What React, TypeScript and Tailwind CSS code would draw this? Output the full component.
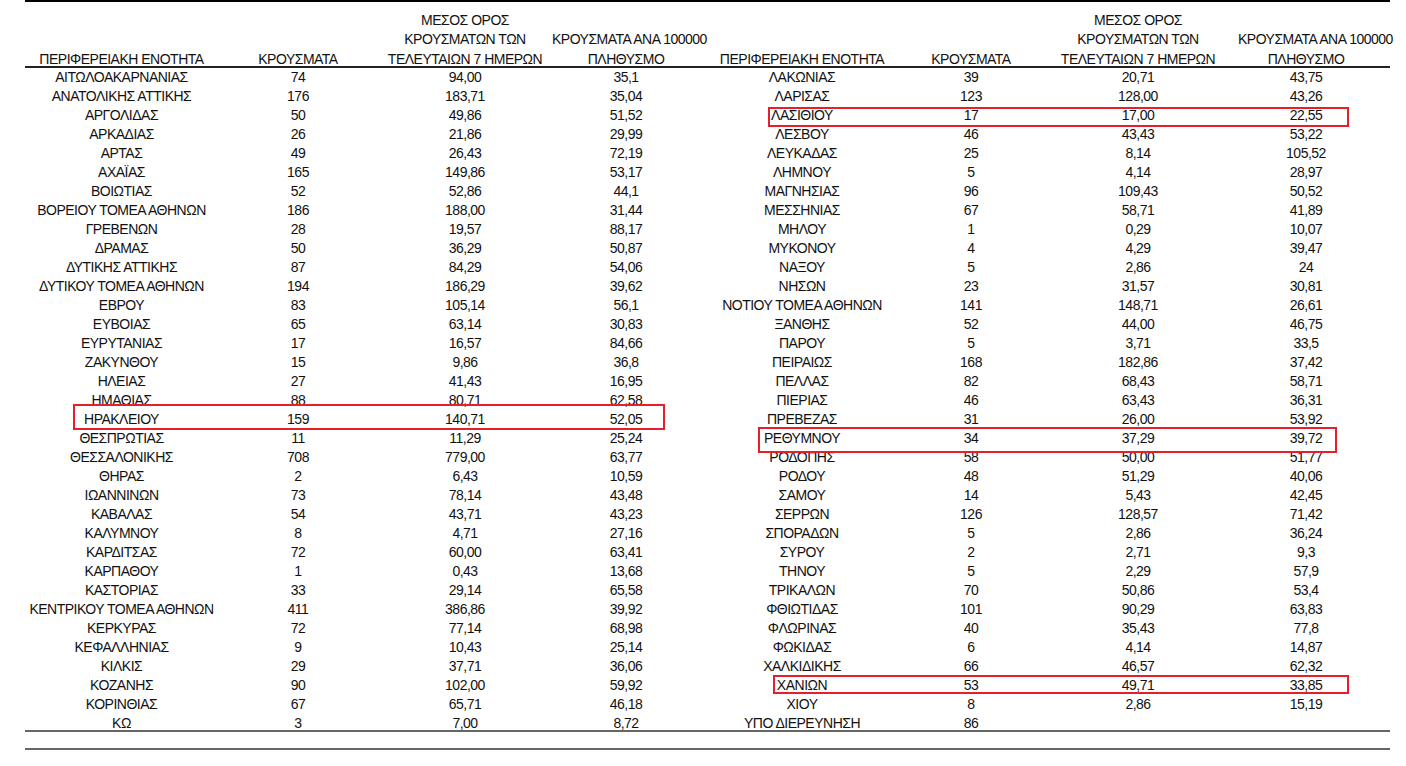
import React from 'react'

type Row = [string, string, string, string]

const left: Row[] = [
  ['ΑΙΤΩΛΟΑΚΑΡΝΑΝΙΑΣ', '74', '94,00', '35,1'],
  ['ΑΝΑΤΟΛΙΚΗΣ ΑΤΤΙΚΗΣ', '176', '183,71', '35,04'],
  ['ΑΡΓΟΛΙΔΑΣ', '50', '49,86', '51,52'],
  ['ΑΡΚΑΔΙΑΣ', '26', '21,86', '29,99'],
  ['ΑΡΤΑΣ', '49', '26,43', '72,19'],
  ['ΑΧΑΪΑΣ', '165', '149,86', '53,17'],
  ['ΒΟΙΩΤΙΑΣ', '52', '52,86', '44,1'],
  ['ΒΟΡΕΙΟΥ ΤΟΜΕΑ ΑΘΗΝΩΝ', '186', '188,00', '31,44'],
  ['ΓΡΕΒΕΝΩΝ', '28', '19,57', '88,17'],
  ['ΔΡΑΜΑΣ', '50', '36,29', '50,87'],
  ['ΔΥΤΙΚΗΣ ΑΤΤΙΚΗΣ', '87', '84,29', '54,06'],
  ['ΔΥΤΙΚΟΥ ΤΟΜΕΑ ΑΘΗΝΩΝ', '194', '186,29', '39,62'],
  ['ΕΒΡΟΥ', '83', '105,14', '56,1'],
  ['ΕΥΒΟΙΑΣ', '65', '63,14', '30,83'],
  ['ΕΥΡΥΤΑΝΙΑΣ', '17', '16,57', '84,66'],
  ['ΖΑΚΥΝΘΟΥ', '15', '9,86', '36,8'],
  ['ΗΛΕΙΑΣ', '27', '41,43', '16,95'],
  ['ΗΜΑΘΙΑΣ', '88', '80,71', '62,58'],
  ['ΗΡΑΚΛΕΙΟΥ', '159', '140,71', '52,05'],
  ['ΘΕΣΠΡΩΤΙΑΣ', '11', '11,29', '25,24'],
  ['ΘΕΣΣΑΛΟΝΙΚΗΣ', '708', '779,00', '63,77'],
  ['ΘΗΡΑΣ', '2', '6,43', '10,59'],
  ['ΙΩΑΝΝΙΝΩΝ', '73', '78,14', '43,48'],
  ['ΚΑΒΑΛΑΣ', '54', '43,71', '43,23'],
  ['ΚΑΛΥΜΝΟΥ', '8', '4,71', '27,16'],
  ['ΚΑΡΔΙΤΣΑΣ', '72', '60,00', '63,41'],
  ['ΚΑΡΠΑΘΟΥ', '1', '0,43', '13,68'],
  ['ΚΑΣΤΟΡΙΑΣ', '33', '29,14', '65,58'],
  ['ΚΕΝΤΡΙΚΟΥ ΤΟΜΕΑ ΑΘΗΝΩΝ', '411', '386,86', '39,92'],
  ['ΚΕΡΚΥΡΑΣ', '72', '77,14', '68,98'],
  ['ΚΕΦΑΛΛΗΝΙΑΣ', '9', '10,43', '25,14'],
  ['ΚΙΛΚΙΣ', '29', '37,71', '36,06'],
  ['ΚΟΖΑΝΗΣ', '90', '102,00', '59,92'],
  ['ΚΟΡΙΝΘΙΑΣ', '67', '65,71', '46,18'],
  ['ΚΩ', '3', '7,00', '8,72'],
]

const right: Row[] = [
  ['ΛΑΚΩΝΙΑΣ', '39', '20,71', '43,75'],
  ['ΛΑΡΙΣΑΣ', '123', '128,00', '43,26'],
  ['ΛΑΣΙΘΙΟΥ', '17', '17,00', '22,55'],
  ['ΛΕΣΒΟΥ', '46', '43,43', '53,22'],
  ['ΛΕΥΚΑΔΑΣ', '25', '8,14', '105,52'],
  ['ΛΗΜΝΟΥ', '5', '4,14', '28,97'],
  ['ΜΑΓΝΗΣΙΑΣ', '96', '109,43', '50,52'],
  ['ΜΕΣΣΗΝΙΑΣ', '67', '58,71', '41,89'],
  ['ΜΗΛΟΥ', '1', '0,29', '10,07'],
  ['ΜΥΚΟΝΟΥ', '4', '4,29', '39,47'],
  ['ΝΑΞΟΥ', '5', '2,86', '24'],
  ['ΝΗΣΩΝ', '23', '31,57', '30,81'],
  ['ΝΟΤΙΟΥ ΤΟΜΕΑ ΑΘΗΝΩΝ', '141', '148,71', '26,61'],
  ['ΞΑΝΘΗΣ', '52', '44,00', '46,75'],
  ['ΠΑΡΟΥ', '5', '3,71', '33,5'],
  ['ΠΕΙΡΑΙΩΣ', '168', '182,86', '37,42'],
  ['ΠΕΛΛΑΣ', '82', '68,43', '58,71'],
  ['ΠΙΕΡΙΑΣ', '46', '63,43', '36,31'],
  ['ΠΡΕΒΕΖΑΣ', '31', '26,00', '53,92'],
  ['ΡΕΘΥΜΝΟΥ', '34', '37,29', '39,72'],
  ['ΡΟΔΟΠΗΣ', '58', '50,00', '51,77'],
  ['ΡΟΔΟΥ', '48', '51,29', '40,06'],
  ['ΣΑΜΟΥ', '14', '5,43', '42,45'],
  ['ΣΕΡΡΩΝ', '126', '128,57', '71,42'],
  ['ΣΠΟΡΑΔΩΝ', '5', '2,86', '36,24'],
  ['ΣΥΡΟΥ', '2', '2,71', '9,3'],
  ['ΤΗΝΟΥ', '5', '2,29', '57,9'],
  ['ΤΡΙΚΑΛΩΝ', '70', '50,86', '53,4'],
  ['ΦΘΙΩΤΙΔΑΣ', '101', '90,29', '63,83'],
  ['ΦΛΩΡΙΝΑΣ', '40', '35,43', '77,8'],
  ['ΦΩΚΙΔΑΣ', '6', '4,14', '14,87'],
  ['ΧΑΛΚΙΔΙΚΗΣ', '66', '46,57', '62,32'],
  ['ΧΑΝΙΩΝ', '53', '49,71', '33,85'],
  ['ΧΙΟΥ', '8', '2,86', '15,19'],
  ['ΥΠΟ ΔΙΕΡΕΥΝΗΣΗ', '86', '', ''],
]

// στήλες: όνομα / κρούσματα / μέσος όρος / ανά 100000 — δύο φορές
const cols = 'grid grid-cols-[193px_160px_174px_148px_204px_134px_200px_136px_16px]'

function HeaderCells() {
  return (
    <>
      <div className="-mb-[3px]">ΠΕΡΙΦΕΡΕΙΑΚΗ ΕΝΟΤΗΤΑ</div>
      <div className="-mb-[3px]">ΚΡΟΥΣΜΑΤΑ</div>
      <div className="-mb-[3px]">
        ΜΕΣΟΣ ΟΡΟΣ
        <br />
        ΚΡΟΥΣΜΑΤΩΝ ΤΩΝ
        <br />
        ΤΕΛΕΥΤΑΙΩΝ 7 ΗΜΕΡΩΝ
      </div>
      <div className="-mb-[3px]">
        ΚΡΟΥΣΜΑΤΑ ΑΝΑ 100000
        <br />
        ΠΛΗΘΥΣΜΟ
      </div>
    </>
  )
}

/* κόκκινα πλαίσια επισήμανσης (πάνω από τον πίνακα) */
const marks = [
  'left-[73px] top-[404px] w-[592px] h-[26px]',
  'left-[768px] top-[107px] w-[581px] h-[20px]',
  'left-[758px] top-[427px] w-[579px] h-[26px]',
  'left-[773px] top-[675px] w-[576px] h-[19px]',
]

export default function App() {
  return (
    <div
      className="relative w-[1406px] h-[766px] bg-white text-[#111] text-[14px] tracking-[-0.5px] overflow-hidden"
      style={{ fontFamily: '"Liberation Sans", Arial, sans-serif' }}
    >
      <div className="ml-[25px] w-[1365px] border-t-2 border-black">
        {/* κεφαλίδα */}
        <div className={`${cols} h-[66px] items-end text-center leading-[19.5px] whitespace-nowrap border-b-2 border-[#222]`}>
          <HeaderCells />
          <HeaderCells />
          <div />
        </div>

        {/* γραμμές δεδομένων */}
        <div className={`${cols} auto-rows-[19px] items-center text-center leading-[19px] whitespace-nowrap`}>
          {left.map((l, i) => {
            const r = right[i]
            return (
              <React.Fragment key={i}>
                <div>{l[0]}</div>
                <div>{l[1]}</div>
                <div>{l[2]}</div>
                <div>{l[3]}</div>
                <div>{r[0]}</div>
                <div>{r[1]}</div>
                <div>{r[2]}</div>
                <div>{r[3]}</div>
                <div />
              </React.Fragment>
            )
          })}
        </div>

        <div className="-mt-[3px] border-t-2 border-[#666]" />
        <div className="mt-[16px] border-t-2 border-[#666]" />
      </div>

      {marks.map(m => (
        <div key={m} className={`absolute border-[2.5px] border-[#e5202a] ${m}`} />
      ))}
    </div>
  )
}
